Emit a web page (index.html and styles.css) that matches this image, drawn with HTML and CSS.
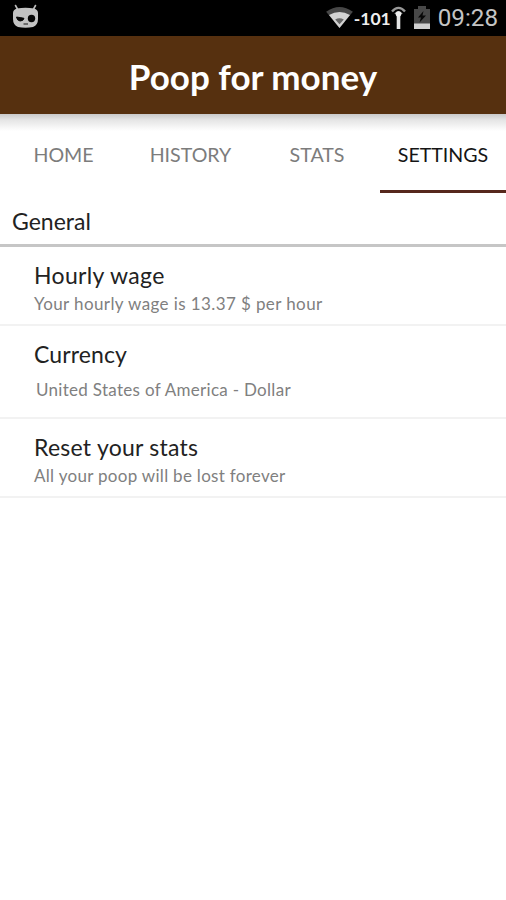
FILE: index.html
```html
<!DOCTYPE html>
<html lang="en">
<head>
<meta charset="utf-8">
<title>Poop for money</title>
<link rel="stylesheet" href="styles.css">
</head>
<body>
<div class="status">
  <svg class="droid" width="28" height="26" viewBox="0 0 28 26">
    <path d="M3.500 1.500 6 6M23.500 1.500 21 6" stroke="#bbb" stroke-width="1.600" stroke-linecap="round"/>
    <path d="M5 4.500Q13.500 3 22 4.500Q26 5.500 26 9V15Q26 21 21 23Q13.500 24.500 6 23Q1 21 1 15V9Q1 5.500 5 4.500Z" fill="#c3c3c3"/>
    <path d="M4.500 13Q8 13.500 12 14.300Q11.500 17 8 17Q5 16.500 4.500 13Z" fill="#070707" stroke="#070707"/>
    <circle cx="19.500" cy="14.500" r="3.700" fill="#070707"/>
    <path d="M11.500 20H16" stroke="#333" fill="none" stroke-width="1.200"/>
  </svg>
  <div class="indicators">
    <svg class="wifi" width="27" height="21" viewBox="0 0 28 22">
      <path d="M0 5Q14-5 28 5L14 22Z" fill="#474747"/>
      <path d="M3 8.500Q14 2 25 8.500L14 22Z" fill="#d2d2d2"/>
      <path d="M9.500 13Q14 10.500 18.500 13L14 18Z" fill="#666"/>
    </svg>
    <span class="signal">-101</span>
    <svg class="antenna" width="15" height="23" viewBox="0 0 15 23">
      <path d="M1 5.500Q7.500-1.800 14 5.500" fill="none" stroke="#999" stroke-width="2.400"/>
      <path d="M4 8Q7.500 3.500 11 8" fill="none" stroke="#aaa" stroke-width="1.500"/>
      <path d="M7.500 7V23" stroke="#e4e4e4" stroke-width="3.600"/>
      <circle cx="7.500" cy="8" r="2.700" fill="#eee"/>
    </svg>
    <svg class="battery" width="16" height="23" viewBox="0 0 16 23">
      <path d="M4 0H12V3H16V18H0V3H4Z" fill="#484848"/>
      <path d="M0 17.500H16V23H0Z" fill="#d0d0d0"/>
      <path d="M9.500 5 4 11.500H7L5.500 16.500 12 9.500H8.500Z" fill="#080808"/>
    </svg>
    <span class="clock">09:28</span>
  </div>
</div>
<header class="appbar"><h1>Poop for money</h1></header>
<nav class="tabs">
  <a class="tab home"><span>HOME</span></a>
  <a class="tab history"><span>HISTORY</span></a>
  <a class="tab stats"><span>STATS</span></a>
  <a class="tab active"><span>SETTINGS</span></a>
</nav>
<main>
  <h2>General</h2>
  <section class="row">
    <h3 class="wage">Hourly wage</h3>
    <p class="wage-note">Your hourly wage is 13.37 $ per hour</p>
  </section>
  <section class="row currency">
    <h3>Currency</h3>
    <p>United States of America - Dollar</p>
  </section>
  <section class="row">
    <h3>Reset your stats</h3>
    <p>All your poop will be lost forever</p>
  </section>
</main>
</body>
</html>
```
FILE: styles.css
```css
* { box-sizing: border-box; }
body { margin: 0; background: #fff; color: #222; font-family: Lato, "Liberation Sans", sans-serif; height: 900px; overflow: hidden; white-space: nowrap; }
svg { display: block; flex: none; }
h1, h2, h3, p { margin: 0; font-weight: 400; }
.status { height: 36px; background: #000; display: flex; justify-content: space-between; padding: 0 8px 0 12px; }
.droid { margin-top: 4px; }
.indicators { display: flex; align-items: flex-start; }
.wifi { margin: 7px 1px 0 0; }
.signal { color: #eee; font-size: 17.5px; font-weight: 700; line-height: 37px; }
.antenna { margin-top: 6px; }
.battery { margin: 6px 8px 0 8px; }
.clock { color: #c4c4c4; font: 24.2px/37px Roboto, sans-serif; }
.appbar { height: 78px; background: #56300f; display: flex; justify-content: center; }
.appbar h1 { color: #fff; font-size: 35px; font-weight: 700; line-height: 80px; }
.tabs { height: 79px; display: flex; background: linear-gradient(#c9c9c9, #e5e5e5 6px, #fff 17px); font-size: 19.6px; line-height: 82px; color: #7c7c7c; }
.tab { display: flex; justify-content: center; }
.home { width: 127px; }
.history { width: 127px; }
.stats { width: 126px; }
.active { width: 126px; color: #151515; border-bottom: 3px solid #56281c; }
h2 { height: 54px; border-bottom: 3px solid #c6c6c6; padding-left: 12px; font-size: 23px; line-height: 56px; }
.row { height: 79px; padding: 11px 34px 0; border-bottom: 2px solid #f2f2f2; }
h3 { font-size: 23px; line-height: 34px; letter-spacing: .25px; }
.wage { letter-spacing: .35px; }
p { font-size: 17px; line-height: 24px; color: #808080; letter-spacing: .3px; }
.wage-note { letter-spacing: .4px; }
.currency { height: 93px; }
.currency h3 { letter-spacing: .12px; }
.currency p { padding: 7px 0 0 2px; }
```
